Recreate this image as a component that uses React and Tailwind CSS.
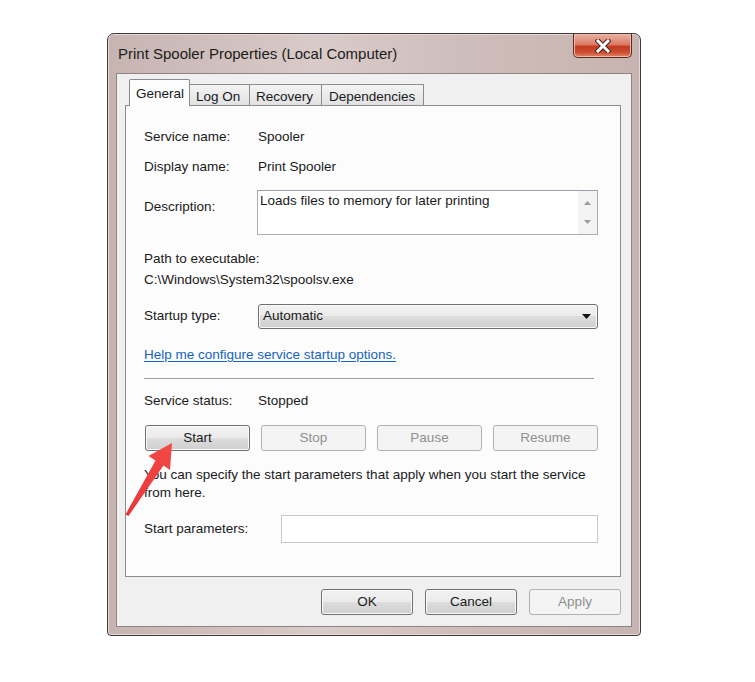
const btn =
  "h-[26px] rounded-[3px] border border-[#707070] bg-[linear-gradient(#f2f2f2_0%,#ebebeb_50%,#dddddd_50%,#cfcfcf_100%)] shadow-[inset_0_0_0_1px_#fbfbfb] flex items-center justify-center text-[#1a1a1a]";
const btnDis =
  "h-[26px] rounded-[3px] border border-[#adb2b5] bg-[#f4f4f4] flex items-center justify-center text-[#8f8f8f]";

function Row({ label, children, className = "" }) {
  return (
    <div className={"flex items-center h-[20px] " + className}>
      <div className="w-[114px] shrink-0">{label}</div>
      <div>{children}</div>
    </div>
  );
}

export default function App() {
  return (
    <div className="relative w-[755px] h-[682px] bg-white overflow-hidden font-['Liberation_Sans',Arial,sans-serif] text-[13.5px] text-[#1a1a1a]">
      <div className="ml-[107px] pt-[33px]">
        <div className="w-[534px] h-[603px] rounded-t-[7px] rounded-b-[4px] border border-[#3f3a3a] bg-[linear-gradient(90deg,#c6b4b1_0%,#d9cbc9_40%,#cdbcb9_70%,#c7b4b1_100%)] shadow-[inset_0_0_0_1px_#e4dad9] flex flex-col px-[8px] pb-[8px]">
          {/* title bar */}
          <div className="h-[39px] flex items-start justify-between">
            <span className="mt-[9px] ml-[2px] text-[15px] text-[#1c1c1c]">
              Print Spooler Properties (Local Computer)
            </span>
            <div className="w-[59px] h-[24px] rounded-b-[5px] border border-t-0 border-[#5b2b22] bg-[linear-gradient(#eab1a3_0%,#dc7c66_45%,#c23a20_55%,#cc4f31_80%,#e0876a_100%)] shadow-[inset_0_0_0_1px_#f0b8a8] flex items-center justify-center">
              <svg width="16" height="14" viewBox="0 0 16 14">
                <path d="M3 2 L13 12 M13 2 L3 12" stroke="#4a2018" strokeWidth="5" strokeLinecap="square" />
                <path d="M3 2 L13 12 M13 2 L3 12" stroke="#ffffff" strokeWidth="3" strokeLinecap="square" />
              </svg>
            </div>
          </div>
          {/* client area */}
          <div className="flex-1 bg-[#f0f0f0] border border-[#8f8483] flex flex-col px-[8px] pt-[6px]">
            {/* tabs */}
            <div className="flex h-[26px] items-end pl-[4px] relative z-10 -mb-px">
              <div className="w-[61px] h-[27px] bg-[#fcfcfc] border border-b-0 border-[#898c95] rounded-t-[2px] pl-[6px] pt-[4px]">
                General
              </div>
              <div className="w-[60px] h-[22px] bg-[linear-gradient(#f3f3f3,#e2e2e2)] border border-l-0 border-[#898c95] pl-[6px] pt-[2px]">
                Log On
              </div>
              <div className="w-[72px] h-[22px] bg-[linear-gradient(#f3f3f3,#e2e2e2)] border border-l-0 border-[#898c95] pl-[6px] pt-[2px]">
                Recovery
              </div>
              <div className="w-[102px] h-[22px] bg-[linear-gradient(#f3f3f3,#e2e2e2)] border border-l-0 border-[#898c95] pl-[7px] pt-[2px]">
                Dependencies
              </div>
            </div>
            {/* panel */}
            <div className="w-[496px] h-[472px] bg-[#fcfcfc] border border-[#898c95] pl-[18px] pr-[22px] flex flex-col">
              <Row label="Service name:" className="mt-[21px]">Spooler</Row>
              <Row label="Display name:" className="mt-[10px]">Print Spooler</Row>
              <div className="flex mt-[13px]">
                <div className="w-[113px] shrink-0 pt-[7px]">Description:</div>
                <div className="flex-1 h-[45px] border border-[#abadb3] border-t-[#9da0aa] bg-white flex">
                  <div className="flex-1 pl-[2px] pt-[1px] leading-[18px]">
                    Loads files to memory for later printing
                  </div>
                  <div className="w-[19px] bg-[#f3f3f3] flex flex-col items-center justify-between py-[10px]">
                    <svg width="7" height="4" viewBox="0 0 7 4"><path d="M0 4 L3.5 0 L7 4Z" fill="#9c9c9c" /></svg>
                    <svg width="7" height="4" viewBox="0 0 7 4"><path d="M0 0 L3.5 4 L7 0Z" fill="#9c9c9c" /></svg>
                  </div>
                </div>
              </div>
              <div className="h-[20px] flex items-center mt-[14px]">Path to executable:</div>
              <div className="h-[20px] flex items-center mt-[1px]">C:\Windows\System32\spoolsv.exe</div>
              <div className="flex items-center mt-[14px]">
                <div className="w-[114px] shrink-0">Startup type:</div>
                <div className="flex-1 h-[25px] rounded-[3px] border border-[#707070] bg-[linear-gradient(#f2f2f2_0%,#ebebeb_50%,#dddddd_50%,#cfcfcf_100%)] shadow-[inset_0_0_0_1px_#fafafa] flex items-center justify-between pl-[4px] pr-[6px]">
                  <span>Automatic</span>
                  <svg width="9" height="5" viewBox="0 0 9 5"><path d="M0 0 L9 0 L4.5 5Z" fill="#111" /></svg>
                </div>
              </div>
              <div className="h-[20px] flex items-center mt-[16px]">
                <span className="text-[#1565c0] underline underline-offset-2">Help me configure service startup options.</span>
              </div>
              <div className="h-px bg-[#a0a0a0] mt-[13px] mr-[4px]" />
              <Row label="Service status:" className="mt-[12px]">Stopped</Row>
              <div className="grid grid-cols-4 gap-[11px] mt-[14px] pl-[1px]">
                <div className={btn}>Start</div>
                <div className={btnDis}>Stop</div>
                <div className={btnDis}>Pause</div>
                <div className={btnDis}>Resume</div>
              </div>
              <div className="mt-[15px] leading-[18px] pr-[4px]">
                You can specify the start parameters that apply when you start the service from here.
              </div>
              <div className="flex items-center mt-[13px]">
                <div className="w-[137px] shrink-0">Start parameters:</div>
                <div className="flex-1 h-[28px] border border-[#c6c8cc] bg-white" />
              </div>
            </div>
            {/* bottom buttons */}
            <div className="w-[496px] flex justify-end gap-[12px] mt-[12px]">
              <div className={btn + " w-[92px]"}>OK</div>
              <div className={btn + " w-[92px]"}>Cancel</div>
              <div className={btnDis + " w-[92px]"}>Apply</div>
            </div>
          </div>
        </div>
      </div>
      {/* red annotation arrow */}
      <svg className="absolute left-0 top-0 pointer-events-none" width="755" height="682" viewBox="0 0 755 682">
        <defs>
          <linearGradient id="ar" x1="0" y1="1" x2="1" y2="0">
            <stop offset="0" stopColor="#e8353a" />
            <stop offset="1" stopColor="#f24a45" />
          </linearGradient>
        </defs>
        <polygon
          points="172,443 170,470 163.5,465.5 128.5,516 125.5,514.5 155.5,460.5 148.5,456"
          fill="url(#ar)"
        />
      </svg>
    </div>
  );
}
